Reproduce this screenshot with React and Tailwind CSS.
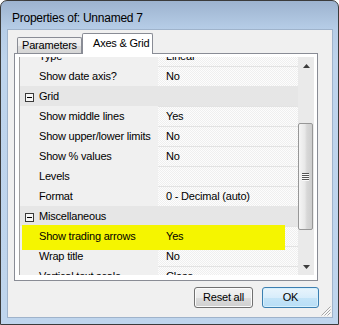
const checker =
  "bg-[image:repeating-conic-gradient(#efefef_0%_25%,#fdfdfd_0%_50%)] bg-[length:2px_2px]";

const rows = [
  { l: "Type", v: "Linear" },
  { l: "Show date axis?", v: "No" },
  { cat: "Grid" },
  { l: "Show middle lines", v: "Yes" },
  { l: "Show upper/lower limits", v: "No" },
  { l: "Show % values", v: "No" },
  { l: "Levels", v: "" },
  { l: "Format", v: "0 - Decimal (auto)" },
  { cat: "Miscellaneous" },
  { l: "Show trading arrows", v: "Yes", hl: true },
  { l: "Wrap title", v: "No" },
  { l: "Vertical text scale", v: "Close" },
];

function Row({ r }) {
  if (r.cat) {
    return (
      <div className="h-[20px] flex bg-[#e6e6e6]">
        <div className="pl-[5px] pt-[7px]">
          <div className="w-[9px] h-[9px] border border-[#3a3a3a] bg-[#f6f6f6] flex items-center justify-center">
            <div className="w-[5px] h-px bg-black" />
          </div>
        </div>
        <div className="pl-[5px] pt-[1px] leading-[19px] whitespace-nowrap">{r.cat}</div>
      </div>
    );
  }
  return (
    <div className={(r.hl ? "relative " : "") + "h-[20px] flex"}>
      {r.hl && <div className="absolute left-[2px] -top-px w-[263px] h-[25px] bg-[#f5f500]" />}
      <div className="w-[138px] shrink-0 pl-[19px] pt-[1px] leading-[19px] whitespace-nowrap overflow-hidden">
        <span className="relative">{r.l}</span>
      </div>
      <div className={"flex-1 pl-[8px] leading-[19px] whitespace-nowrap overflow-hidden border-t border-[#e3e3e3] " + checker}>
        <span className="relative">{r.v}</span>
      </div>
    </div>
  );
}

function Arrow({ down }) {
  return (
    <svg width="7" height="4" viewBox="0 0 7 4">
      <polygon points={down ? "0,0 7,0 3.5,4" : "3.5,0 7,4 0,4"} fill="#3c3c3c" />
    </svg>
  );
}

export default function App() {
  return (
    <div className="w-[339px] h-[325px] bg-white font-['Liberation_Sans',Arial,sans-serif] text-black">
      <div className="w-[339px] h-[325px] rounded-t-[7px] border border-[#3b3b3b] bg-[linear-gradient(to_bottom,#9db3cf_0px,#b6cde7_28px,#bed4ec_60px,#bfd5ed_100%)] flex flex-col">
        <div className="h-[28px] pl-[11px] pt-[10px] leading-[14px] text-[12px] tracking-[-0.25px] whitespace-nowrap">
          Properties of: Unnamed 7
        </div>
        <div className="relative ml-[6px] w-[326px] h-[289px] border border-[#9fb3cb] bg-[#f0f0f0] flex flex-col text-[11px] tracking-[-0.2px]">
          {/* tabs */}
          <div className="h-[23px] flex items-end pl-[9px]">
            <div className="w-[65px] h-[16px] border border-b-0 border-[#898c95] rounded-t-[2px] bg-[linear-gradient(to_bottom,#f3f3f3,#ebebeb_50%,#dddddd_50%,#d6d6d6)] flex justify-center leading-[14px] pt-[0px]">
              Parameters
            </div>
            <div className="relative z-10 w-[71px] h-[21px] -mb-px border border-b-0 border-[#898c95] rounded-t-[2px] bg-white pl-[10px] pt-[2px] leading-[14px] whitespace-nowrap">
              Axes &amp; Grid
            </div>
          </div>
          {/* panel */}
          <div className="ml-[6px] w-[304px] h-[228px] border border-[#898c95] bg-white pl-[4px] pt-[3px]">
            <div className="w-[295px] h-[218px] flex">
              <div className="w-[279px] h-[218px] border-l border-[#a0a0a0] bg-[#f0f0f0] overflow-hidden">
                <div className="-mt-[11px]">
                  {rows.map((r, i) => (
                    <Row key={i} r={r} />
                  ))}
                </div>
              </div>
              <div className="w-[16px] h-[218px] bg-[#eaeaea] flex flex-col">
                <div className="h-[17px] flex items-center justify-center pt-[1px]">
                  <Arrow />
                </div>
                <div className="flex-1">
                  <div className="mt-[49px] w-[15px] h-[107px] border border-[#979797] rounded-[2px] bg-[linear-gradient(to_right,#f5f5f5,#e8e8e8_45%,#d8d8d8_60%,#cdcdcd)] flex items-center justify-center">
                    <div className="flex flex-col">
                      <div className="w-[7px] h-px bg-[#555]" />
                      <div className="w-[7px] h-px bg-[#fafafa]" />
                      <div className="w-[7px] h-px bg-[#555]" />
                      <div className="w-[7px] h-px bg-[#fafafa]" />
                      <div className="w-[7px] h-px bg-[#555]" />
                      <div className="w-[7px] h-px bg-[#fafafa]" />
                      <div className="w-[7px] h-px bg-[#555]" />
                      <div className="w-[7px] h-px bg-[#fafafa]" />
                    </div>
                  </div>
                </div>
                <div className="h-[17px] flex items-center justify-center">
                  <Arrow down />
                </div>
              </div>
            </div>
          </div>
          {/* buttons */}
          <div className="mt-[6px] flex justify-end gap-[9px] pr-[13px]">
            <div className="w-[59px] h-[21px] border border-[#707070] rounded-[3px] bg-[linear-gradient(to_bottom,#f2f2f2,#ebebeb_50%,#dddddd_50%,#cfcfcf)] shadow-[inset_0_0_0_1px_#fbfbfb] flex items-center justify-center whitespace-nowrap">
              Reset all
            </div>
            <div className="w-[57px] h-[21px] border border-[#3c7fb1] rounded-[3px] bg-[linear-gradient(to_bottom,#e8f4fc,#d8edfb_50%,#c4e4f8_50%,#b8def6)] shadow-[inset_0_0_0_1px_#d6f0fd] flex items-center justify-center">
              OK
            </div>
          </div>
          {/* resize grip */}
          <svg className="absolute right-[1px] bottom-[1px]" width="11" height="11" viewBox="0 0 11 11">
            <g stroke="#a6a6a6" strokeWidth="1">
              <line x1="10.5" y1="1.5" x2="1.5" y2="10.5" />
              <line x1="10.5" y1="4.5" x2="4.5" y2="10.5" />
              <line x1="10.5" y1="7.5" x2="7.5" y2="10.5" />
            </g>
            <g stroke="#ffffff" strokeWidth="1">
              <line x1="11" y1="2.5" x2="2.5" y2="11" />
              <line x1="11" y1="5.5" x2="5.5" y2="11" />
              <line x1="11" y1="8.5" x2="8.5" y2="11" />
            </g>
          </svg>
        </div>
      </div>
    </div>
  );
}
